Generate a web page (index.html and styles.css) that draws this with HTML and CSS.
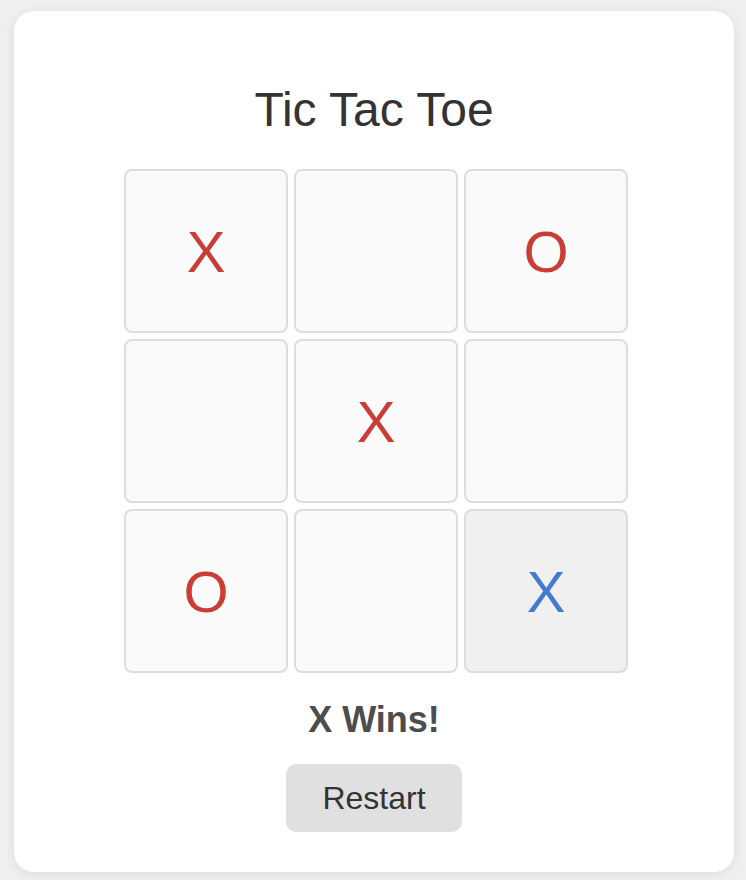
FILE: index.html
```html
<!DOCTYPE html>
<html lang="en">
<head>
<meta charset="utf-8">
<title>Tic Tac Toe</title>
<link rel="stylesheet" href="styles.css">
</head>
<body>
<main class="card">
  <h1 class="title">Tic Tac Toe</h1>
  <div class="board">
    <div class="cell red">X</div>
    <div class="cell"></div>
    <div class="cell red">O</div>
    <div class="cell"></div>
    <div class="cell red">X</div>
    <div class="cell"></div>
    <div class="cell red">O</div>
    <div class="cell"></div>
    <div class="cell win">X</div>
  </div>
  <div class="status">X Wins!</div>
  <button class="restart">Restart</button>
</main>
</body>
</html>
```
FILE: styles.css
```css
html, body {
  margin: 0;
  padding: 0;
}
body {
  background: #efefef;
  font-family: "Liberation Sans", Arial, sans-serif;
  padding: 11px 12px 8px 14px;
}
.card {
  width: 720px;
  height: 861px;
  box-sizing: border-box;
  background: #fff;
  border-radius: 20px;
  box-shadow: 0 2px 12px rgba(0, 0, 0, 0.08);
  padding-top: 71px;
  display: flex;
  flex-direction: column;
  align-items: center;
}
.title {
  margin: 0;
  font-size: 48px;
  line-height: 56px;
  font-weight: normal;
  color: #333;
}
.board {
  margin-top: 31px;
  margin-left: 4px;
  display: grid;
  grid-template-columns: repeat(3, 164px);
  grid-template-rows: repeat(3, 164px);
  gap: 6px;
}
.cell {
  box-sizing: border-box;
  border: 2px solid #dddddd;
  border-radius: 8px;
  background: #fafafa;
  display: flex;
  align-items: center;
  justify-content: center;
  font-size: 58px;
  color: #c93d35;
}
.cell.win {
  background: #f0f0f0;
  color: #447bd0;
}
.status {
  margin-top: 27px;
  font-size: 36px;
  line-height: 40px;
  font-weight: bold;
  color: #4d4d4d;
}
.restart {
  margin-top: 24px;
  font-family: "Liberation Sans", Arial, sans-serif;
  font-size: 32px;
  line-height: 36px;
  padding: 16px 36px;
  border: none;
  border-radius: 10px;
  background: #e0e0e0;
  color: #333;
}
```
